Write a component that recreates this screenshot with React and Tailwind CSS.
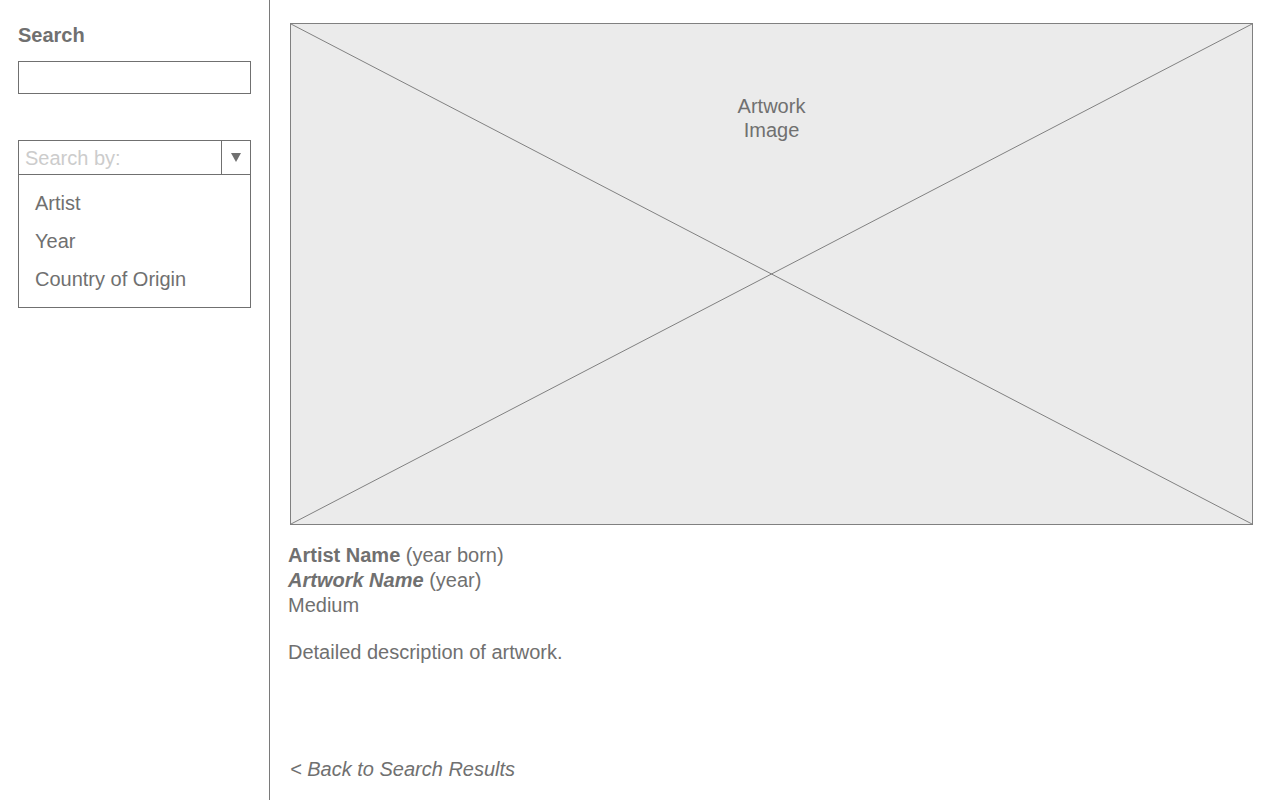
export default function App() {
  return (
    <div
      className="flex h-[800px] w-[1280px] bg-white text-[#707070] overflow-hidden"
      style={{ fontFamily: '"Liberation Sans", Arial, sans-serif' }}
    >
      {/* sidebar */}
      <aside className="w-[270px] shrink-0 border-r border-[#7a7a7a] px-[18px] pt-[23px]">
        <h2 className="text-[20px] font-bold leading-[24px]">Search</h2>
        <div className="mt-[14px] h-[33px] w-[233px] border border-[#707070]" />

        <div className="mt-[46px] w-[233px]">
          <div className="flex h-[35px] border border-[#707070]">
            <span className="flex-1 pl-[6px] pt-[5px] text-[20px] leading-[24px] text-[#cccccc]">
              Search by:
            </span>
            <span className="flex w-[29px] items-center justify-center border-l border-[#707070]">
              <svg width="10" height="9" viewBox="0 0 10 9">
                <path d="M0 0 H10 L5 9 Z" fill="#707070" />
              </svg>
            </span>
          </div>
          <ul className="border border-t-0 border-[#707070] pb-[16px] pl-4 pt-[16px] text-[20px] leading-[24px]">
            <li className="h-[38px]">Artist</li>
            <li className="h-[38px]">Year</li>
            <li className="h-[24px]">Country of Origin</li>
          </ul>
        </div>
      </aside>

      {/* main */}
      <main className="flex flex-1 flex-col pl-[20px] pr-[27px] pt-[23px]">
        <div className="relative h-[502px] w-[963px] border border-[#808080] bg-[#ebebeb]">
          <svg
            className="absolute inset-0 h-full w-full"
            viewBox="0 0 961 500"
            preserveAspectRatio="none"
          >
            <line x1="0" y1="0" x2="961" y2="500" stroke="#808080" strokeWidth="1" />
            <line x1="961" y1="0" x2="0" y2="500" stroke="#808080" strokeWidth="1" />
          </svg>
          <p className="relative pt-[70px] text-center text-[20px] leading-[24px]">
            Artwork
            <br />
            Image
          </p>
        </div>

        <div className="-ml-[2px] mt-[18px] text-[20px] leading-[25px]">
          <p>
            <span className="font-bold">Artist Name</span> (year born)
          </p>
          <p>
            <span className="font-bold italic">Artwork Name</span> (year)
          </p>
          <p>Medium</p>
          <p className="mt-[22px]">Detailed description of artwork.</p>
        </div>

        <a className="mt-[92px] italic text-[20px] leading-[25px]" href="#">
          &lt; Back to Search Results
        </a>
      </main>
    </div>
  );
}
